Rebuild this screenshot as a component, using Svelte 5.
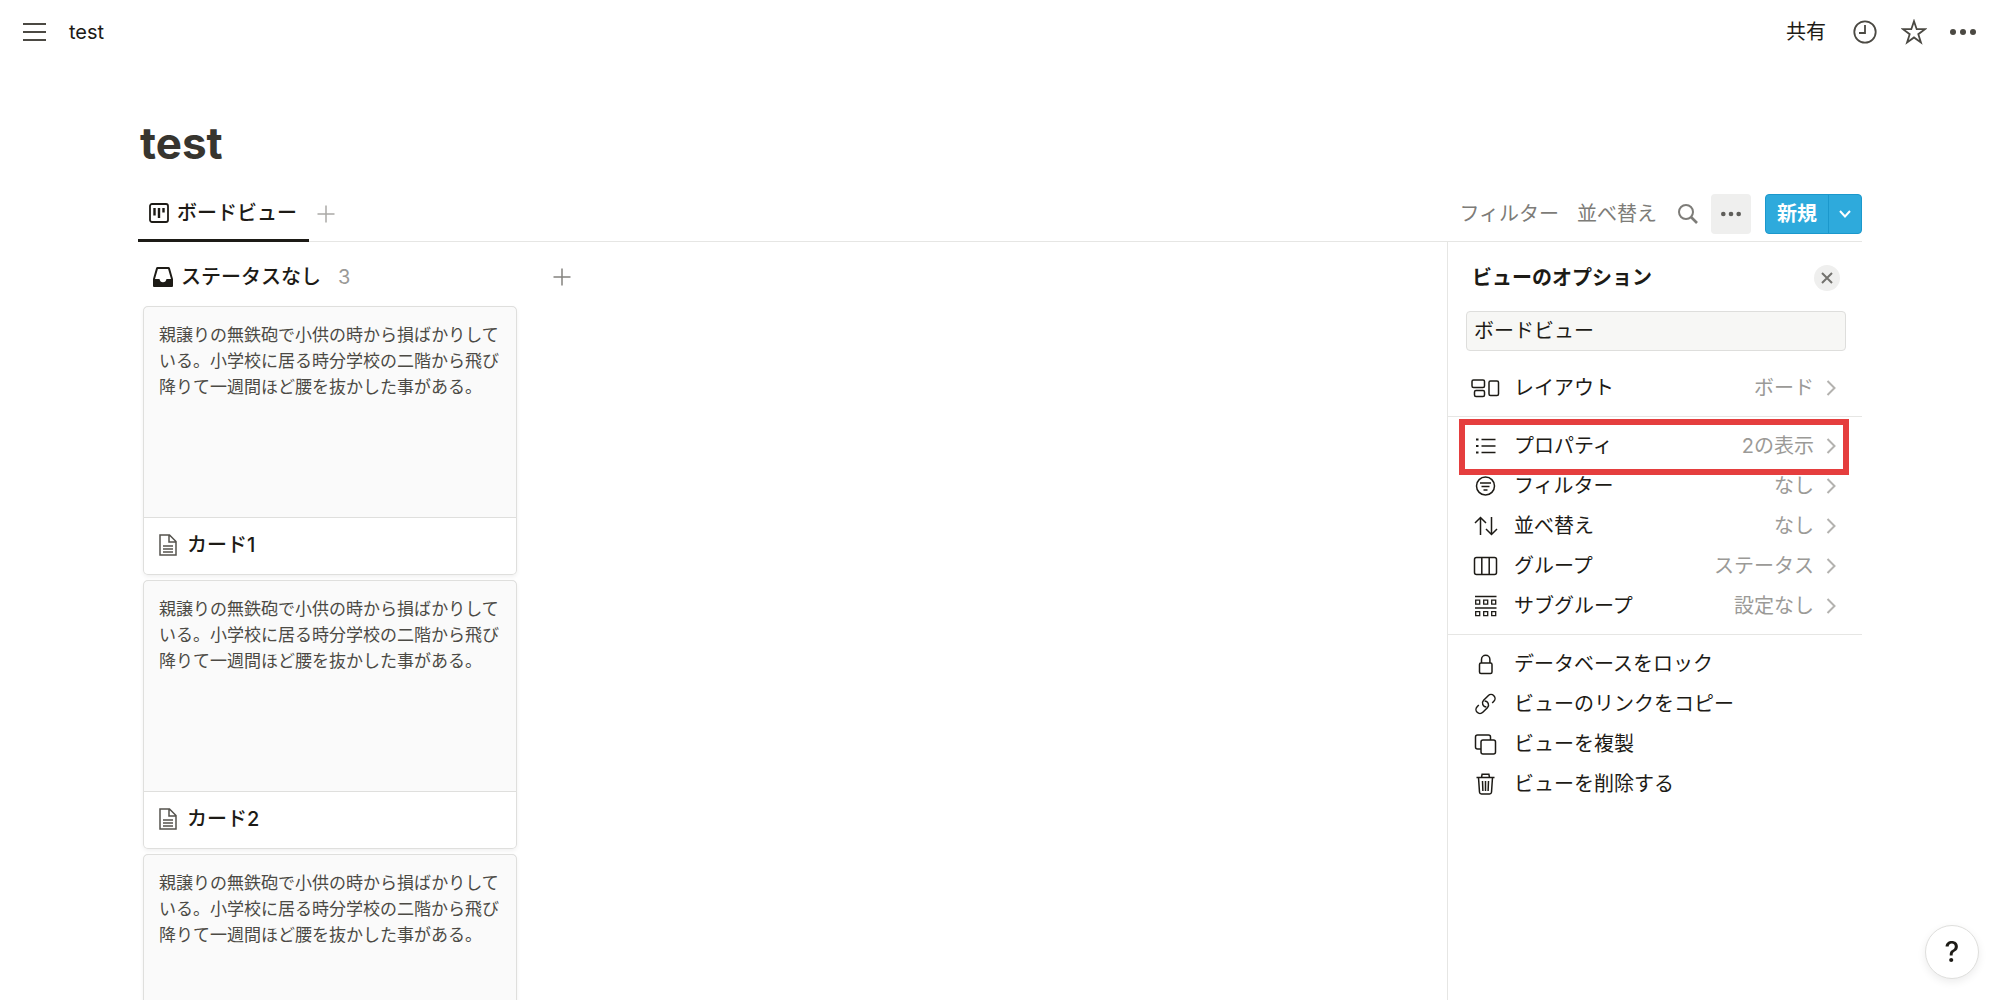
<script lang="ts">
  interface Card {
    readonly title?: string;
  }

  interface Option {
    readonly icon: string;
    readonly label: string;
    readonly value?: string;
    readonly highlighted?: boolean;
  }

  const excerpt =
    "親譲りの無鉄砲で小供の時から損ばかりしている。小学校に居る時分学校の二階から飛び降りて一週間ほど腰を抜かした事がある。";

  const cards: Card[] = [{ title: "カード1" }, { title: "カード2" }, {}];

  const sections: Option[][] = [
    [{ icon: "layout", label: "レイアウト", value: "ボード" }],
    [
      { icon: "list", label: "プロパティ", value: "2の表示", highlighted: true },
      { icon: "filter", label: "フィルター", value: "なし" },
      { icon: "sort", label: "並べ替え", value: "なし" },
      { icon: "group", label: "グループ", value: "ステータス" },
      { icon: "subgroup", label: "サブグループ", value: "設定なし" },
    ],
    [
      { icon: "lock", label: "データベースをロック" },
      { icon: "link", label: "ビューのリンクをコピー" },
      { icon: "copy", label: "ビューを複製" },
      { icon: "trash", label: "ビューを削除する" },
    ],
  ];

  let viewName = $state("ボードビュー");
</script>

{#snippet dots(size: number)}
  <svg class="solid" width={size} height={size} viewBox="0 0 26 26" aria-hidden="true">
    <circle cx="3" cy="13" r="3" />
    <circle cx="13" cy="13" r="3" />
    <circle cx="23" cy="13" r="3" />
  </svg>
{/snippet}

{#snippet plus()}
  <svg width="18" height="18" viewBox="0 0 18 18" aria-hidden="true">
    <path d="M9 0.5v17M0.5 9h17" />
  </svg>
{/snippet}

{#snippet optionIcon(name: string)}
  <svg width="30" height="24" viewBox="0 0 30 24" aria-hidden="true">
    {#if name === "layout"}
      <rect x="1" y="4" width="12.5" height="7.5" rx="1.5" />
      <rect x="3.5" y="14.5" width="10" height="6" rx="1.5" />
      <rect x="18" y="5" width="9.5" height="14.5" rx="1.5" />
    {:else if name === "list"}
      <path d="M10.5 5.5h14M10.5 12h14M10.5 18.5h14" />
      <path d="M5 5.5h2.5M5 12h2.5M5 18.5h2.5" stroke-width="2" />
    {:else if name === "filter"}
      <circle cx="14.5" cy="12" r="9" />
      <path d="M9 9h11M10.5 12.5h8M12.5 16h4" />
    {:else if name === "sort"}
      <path d="M9.5 21V3.5M4 9l5.5-5.5L15 9M20.5 3v17.5M15 15l5.5 5.5L26 15" />
    {:else if name === "group"}
      <rect x="3.5" y="3.5" width="22" height="17" rx="2" />
      <path d="M10.8 3.5v17M18.2 3.5v17" />
    {:else if name === "subgroup"}
      <path d="M4 2.5h21.5M4 14h21.5" />
      <path
        d="M4.7 6.2h4v4h-4zM12.7 6.2h4v4h-4zM20.7 6.2h4v4h-4zM4.7 17.7h4v4h-4zM12.7 17.7h4v4h-4zM20.7 17.7h4v4h-4z"
        stroke-width="1.3"
      />
    {:else if name === "lock"}
      <rect x="8.5" y="11" width="12.5" height="10.5" rx="1.5" />
      <path d="M10.5 11V7.5a4.2 4.2 0 0 1 8.4 0V11" />
    {:else if name === "link"}
      <g transform="translate(14.5 12) rotate(-45)">
        <path d="M-5.5-4h-2.3a4 4 0 0 0 0 8h6.5a4 4 0 0 0 2.8-6.8" />
        <path d="M5.5 4h2.3a4 4 0 0 0 0-8H1.300a4 4 0 0 0-2.800 6.800" />
      </g>
    {:else if name === "copy"}
      <rect x="10" y="8" width="14.5" height="14" rx="2" />
      <path d="M10 17H6.5a2 2 0 0 1-2-2V5a2 2 0 0 1 2-2h11a2 2 0 0 1 2 2v3" />
    {:else if name === "trash"}
      <path
        d="M5.5 5.5h18M10.5 5.5l.6-3.3h6.8l.6 3.3M7.500 5.500l1 14.700a2 2 0 0 0 2 1.800h8a2 2 0 0 0 2-1.800l1-14.700"
      />
      <path d="M11.500 9l.4 10M14.500 9v10M17.500 9l-.4 10" />
    {/if}
  </svg>
{/snippet}

<div class="page">
  <header class="topbar">
    <button class="menu" type="button" aria-label="メニュー">
      <svg width="23" height="20" viewBox="0 0 23 20" aria-hidden="true">
        <path d="M0 2h23M0 10h23M0 18h23" stroke-width="2" />
      </svg>
    </button>
    <a class="crumb" href="#test">test</a>
    <button class="share" type="button">共有</button>
    <button class="top-action" type="button" aria-label="更新履歴">
      <svg width="24" height="24" viewBox="0 0 24 24" aria-hidden="true">
        <circle cx="12" cy="12" r="10.7" stroke-width="1.8" />
        <path d="M12 5v8H6" stroke-width="1.8" />
      </svg>
    </button>
    <button class="top-action" type="button" aria-label="お気に入り">
      <svg width="26" height="26" viewBox="0 0 26 26" aria-hidden="true">
        <path
          d="M13 2.2l2.700 8h8.300l-6.700 5 2.600 8.200-6.900-5-6.900 5 2.600-8.200-6.700-5h8.300z"
          stroke-width="1.8"
        />
      </svg>
    </button>
    <button class="top-action" type="button" aria-label="その他">{@render dots(26)}</button>
  </header>

  <main>
    <h1>test</h1>

    <div class="toolbar">
      <button class="tab" type="button" aria-pressed="true">
        <svg width="20" height="20" viewBox="0 0 20 20" aria-hidden="true">
          <rect x="1" y="1" width="18" height="18" rx="2" stroke-width="1.8" />
          <path d="M5.5 5v7.5M10 5v10M14.5 5v4.5" stroke-width="2.4" />
        </svg>
        ボードビュー
      </button>
      <button class="add-view" type="button" aria-label="ビューを追加">{@render plus()}</button>

      <div class="controls">
        <button class="text-button" type="button">フィルター</button>
        <button class="text-button" type="button">並べ替え</button>
        <button class="search" type="button" aria-label="検索">
          <svg width="20" height="20" viewBox="0 0 20 20" aria-hidden="true">
            <circle cx="8" cy="8" r="7" stroke-width="2" />
            <path d="M13 13l6 6" stroke-width="2.6" />
          </svg>
        </button>
        <button class="more" type="button" aria-label="ビューのオプション">{@render dots(20)}</button>
        <div class="create">
          <button class="create-main" type="button">新規</button>
          <button class="create-menu" type="button" aria-label="新規メニュー">
            <svg width="12" height="8" viewBox="0 0 12 8" aria-hidden="true">
              <path d="M1 1l5 5.5L11 1" stroke-width="2" />
            </svg>
          </button>
        </div>
      </div>
    </div>

    <div class="content">
      <div class="board">
        <section class="column">
          <div class="column-head">
            <svg width="20" height="20" viewBox="0 0 20 20" aria-hidden="true">
              <path
                class="solid"
                fill-rule="evenodd"
                d="M4.5 0h11a1.5 1.5 0 0 1 1.4 1L20 12v7a1 1 0 0 1-1 1H1a1 1 0 0 1-1-1v-7L3.1 1A1.500 1.500 0 0 1 4.500 0zM4.900 2L2 12h4.500c.3 2 1.600 3.300 3.500 3.300s3.200-1.300 3.500-3.300H18L15.100 2z"
              />
            </svg>
            <h2>ステータスなし</h2>
            <span class="count">3</span>
          </div>
          {#each cards as card}
            <article class="card">
              <p>{excerpt}</p>
              {#if card.title}
                <h3>
                  <svg width="18" height="22" viewBox="0 0 18 22" aria-hidden="true">
                    <path d="M1 1h9.5L17 7.5V21H1zM10 1v7h7" />
                    <path d="M4 12h10M4 15h10M4 18h10" />
                  </svg>
                  {card.title}
                </h3>
              {/if}
            </article>
          {/each}
        </section>
        <button class="add-group" type="button" aria-label="グループを追加">{@render plus()}</button>
      </div>

      <aside class="panel">
        <div class="panel-head">
          <h2>ビューのオプション</h2>
          <button class="close" type="button" aria-label="閉じる">
            <svg width="12" height="12" viewBox="0 0 12 12" aria-hidden="true">
              <path d="M1 1l10 10M11 1L1 11" stroke-width="2" />
            </svg>
          </button>
        </div>
        <input type="text" aria-label="ビュー名" bind:value={viewName} />
        {#each sections as options}
          <div class="section">
            {#each options as option}
              <button class="option" class:highlighted={option.highlighted} type="button">
                {@render optionIcon(option.icon)}
                <span class="label">{option.label}</span>
                {#if option.value}
                  <span class="value">{option.value}</span>
                  <svg class="chevron" width="10" height="16" viewBox="0 0 10 16" aria-hidden="true">
                    <path d="M1.5 1l7 7-7 7" stroke-width="2" />
                  </svg>
                {/if}
              </button>
            {/each}
          </div>
        {/each}
      </aside>
    </div>
  </main>

  <button class="help" type="button" aria-label="ヘルプ">?</button>
</div>

<style>
  :global(body) {
    margin: 0;
    background: #fff;
  }

  .page {
    --text: #1d1b16;
    --muted: #9b9a97;
    --line: #e6e6e4;
    display: flex;
    flex-direction: column;
    height: 100vh;
    overflow: hidden;
    color: var(--text);
    font-family: Inter, "Noto Sans CJK JP", sans-serif;
    font-size: 20px;
    line-height: 28px;
  }

  button,
  input {
    box-sizing: border-box;
    margin: 0;
    padding: 0;
    border: 0;
    background: none;
    color: inherit;
    font: inherit;
  }

  button {
    display: flex;
    align-items: center;
    justify-content: center;
    white-space: nowrap;
    cursor: pointer;
  }

  h1,
  h2,
  h3,
  p {
    margin: 0;
  }

  h2,
  h3 {
    font-size: 20px;
    font-weight: 500;
  }

  svg {
    flex: none;
    fill: none;
    stroke: currentColor;
    stroke-width: 1.5;
  }

  .solid {
    fill: currentColor;
    stroke: none;
  }

  .topbar {
    display: flex;
    flex: none;
    align-items: center;
    height: 64px;
    padding: 0 13px 0 23px;
  }

  .menu,
  .top-action {
    color: #4b4943;
  }

  .crumb {
    margin: 0 auto 0 23px;
    color: inherit;
    text-decoration: none;
  }

  .share {
    padding: 0 14px;
  }

  .top-action {
    width: 49px;
    height: 40px;
  }

  main {
    display: flex;
    flex: 1;
    flex-direction: column;
    min-height: 0;
    padding: 0 138px;
  }

  h1 {
    padding: 53px 2px 18px;
    color: #37352f;
    font-size: 44px;
    font-weight: 700;
    line-height: 52px;
  }

  .toolbar {
    display: flex;
    flex: none;
    height: 54px;
    border-bottom: 1px solid var(--line);
  }

  .tab {
    gap: 8px;
    height: 55px;
    padding: 0 12px 0 11px;
    border-bottom: 3px solid var(--text);
    font-weight: 500;
  }

  .add-view {
    padding: 0 8px;
    color: #aaa9a6;
  }

  .controls {
    display: flex;
    align-items: center;
    gap: 2px;
    margin-left: auto;
    color: #7d7c78;
  }

  .text-button {
    padding: 0 8px;
  }

  .search {
    width: 42px;
    height: 40px;
  }

  .more {
    width: 40px;
    height: 40px;
    border-radius: 4px;
    background: #efefee;
    color: #5f5e5a;
  }

  .create {
    display: flex;
    box-sizing: border-box;
    height: 40px;
    margin-left: 12px;
    border: 1px solid #1b98cc;
    border-radius: 4px;
    background: #2eaadc;
    color: #fff;
  }

  .create-main {
    padding: 0 11px;
    font-weight: 700;
  }

  .create-menu {
    width: 33px;
    border-left: 1px solid #1b98cc;
  }

  .content {
    display: flex;
    flex: 1;
    min-height: 0;
  }

  .board {
    display: flex;
    flex: 1;
    align-items: flex-start;
    gap: 36px;
    padding: 9px 5px 0;
  }

  .column {
    display: flex;
    flex-direction: column;
    gap: 5px;
    width: 374px;
  }

  .column-head {
    display: flex;
    align-items: center;
    gap: 8px;
    box-sizing: border-box;
    height: 50px;
    padding: 2px 10px 0;
  }

  .count {
    padding-left: 9px;
    color: var(--muted);
  }

  .add-group {
    height: 52px;
    color: #84837f;
  }

  .card {
    overflow: hidden;
    border-radius: 5px;
    background: #fff;
    box-shadow:
      inset 0 0 0 1px #dfdfdd,
      0 2px 4px #0000000f;
  }

  .card p {
    box-sizing: border-box;
    height: 212px;
    padding: 15px 15px 0;
    border: 1px solid #dfdfdd;
    border-radius: 5px 5px 0 0;
    background: #fafafa;
    color: #4c4a45;
    font-size: 17px;
    line-height: 26px;
  }

  .card h3 {
    display: flex;
    align-items: center;
    gap: 10px;
    height: 53px;
    padding: 0 16px 4px;
  }

  .card svg {
    color: #55534e;
  }

  .panel {
    flex: none;
    width: 414px;
    border-left: 1px solid var(--line);
  }

  .panel-head {
    display: flex;
    align-items: center;
    justify-content: space-between;
    box-sizing: border-box;
    height: 69px;
    padding: 2px 22px 0 24px;
  }

  .panel-head h2 {
    font-weight: 700;
  }

  .close {
    width: 26px;
    height: 26px;
    border-radius: 50%;
    background: #efefee;
    color: #73726e;
  }

  input {
    display: block;
    width: calc(100% - 34px);
    height: 40px;
    margin: 0 16px 8px 18px;
    padding: 0 7px 3px;
    border: 1px solid #dededc;
    border-radius: 4px;
    background: #f7f7f5;
  }

  .section {
    padding: 9px 0 8px;
  }

  .section + .section {
    border-top: 1px solid var(--line);
  }

  .option {
    position: relative;
    width: 100%;
    height: 40px;
    padding: 0 26px 0 23px;
  }

  .label {
    margin: 0 auto 0 13px;
  }

  .value {
    color: var(--muted);
  }

  .chevron {
    margin-left: 12px;
    color: #b3b2af;
  }

  /* marker frame around the properties row */
  .highlighted::after {
    position: absolute;
    z-index: 1;
    inset: -7px 13px -9px 11px;
    border: 6px solid #e53e3e;
    content: "";
  }

  .help {
    position: fixed;
    right: 21px;
    bottom: 21px;
    width: 54px;
    height: 54px;
    border: 1px solid #dededc;
    border-radius: 50%;
    background: #fff;
    box-shadow: 0 3px 8px #00000014;
    font-size: 28px;
    font-weight: 500;
  }
</style>
